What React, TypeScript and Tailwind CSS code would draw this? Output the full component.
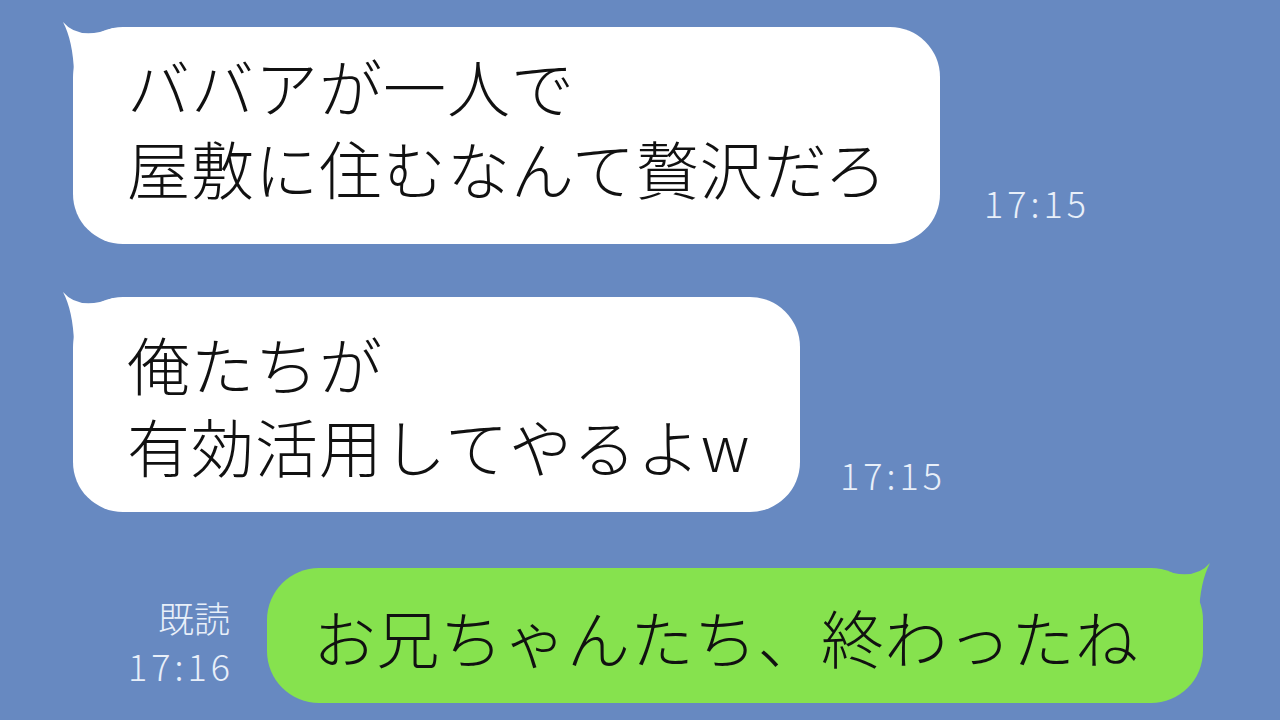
import React from 'react';

const jp = { fontFamily: '"Noto Sans CJK JP", "Noto Sans", sans-serif' };

const Tail: React.FC<{ fill: string; right?: boolean }> = ({ fill, right }) => (
  <svg
    width="60"
    height="56"
    viewBox="0 0 60 56"
    className={
      right
        ? 'absolute -right-[9px] -top-[8px] -scale-x-100'
        : 'absolute -left-[12px] -top-[8px]'
    }
  >
    <path d="M2 3 Q 18 22 52 9 L 52 54 L 13 54 Q 12 22 2 3 Z" fill={fill} />
  </svg>
);

const Time: React.FC<{ children: React.ReactNode; className?: string }> = ({ children, className }) => (
  <div
    className={`text-[36px] leading-none text-[#e8eff9] font-light ${className ?? ''}`}
    style={jp}
  >
    {children}
  </div>
);

const App: React.FC = () => {
  const messages = [
    { lines: ['ババアが一人で', '屋敷に住むなんて贅沢だろ'], time: '17:15', width: 'w-[867px]', pad: 'pt-[17px] pb-[36px]', gap: 'ml-[44px] mb-[24px]' },
    { lines: ['俺たちが', '有効活用してやるよw'], time: '17:15', width: 'w-[727px]', pad: 'pt-[25px] pb-[26px]', gap: 'ml-[40px] mb-[20px]' },
  ];

  return (
    <div className="w-[1280px] h-[720px] overflow-hidden bg-[#6789c1] pt-[27px]" style={jp}>
      <div className="flex flex-col gap-[53px] pl-[73px]">
        {messages.map((m, i) => (
          <div key={i} className="flex items-end">
            <div className={`relative ${m.width} ${m.pad} bg-white rounded-[50px] pl-[54px]`}>
              <Tail fill="#ffffff" />
              <div className="relative text-[63px] leading-[82px] tracking-[1px] font-light text-[#111111] whitespace-nowrap">
                {m.lines.map((l) => (
                  <div key={l}>{l}</div>
                ))}
              </div>
            </div>
            <Time className={`tracking-[4px] ${m.gap}`}>{m.time}</Time>
          </div>
        ))}
      </div>

      <div className="flex items-end justify-end mt-[56px] pr-[77px]">
        <div className="flex flex-col items-end mr-[37px] mb-[20px] gap-[12px]">
          <Time>既読</Time>
          <Time className="tracking-[4px] -mr-[4px]">17:16</Time>
        </div>
        <div className="relative w-[936px] h-[135px] bg-[#86e24e] rounded-[52px] flex items-center pl-[46px]">
          <Tail fill="#86e24e" right />
          <div className="relative text-[63px] leading-none tracking-[0.5px] font-light text-[#111111] whitespace-nowrap">
            お兄ちゃんたち、終わったね
          </div>
        </div>
      </div>
    </div>
  );
};

export default App;
